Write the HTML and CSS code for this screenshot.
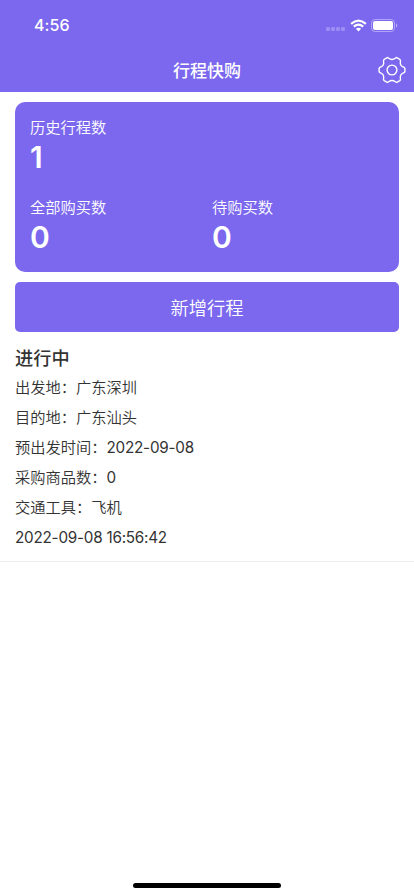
FILE: index.html
```html
<!DOCTYPE html>
<html lang="zh-CN">
<head>
<meta charset="utf-8">
<meta name="viewport" content="width=device-width, initial-scale=1">
<title>行程快购</title>
<link rel="stylesheet" href="styles.css">
</head>
<body>
<header class="top">
  <div class="status">
    <span class="clock">4:56</span>
    <div class="indicators">
      <svg class="signal" width="20" height="6" viewBox="0 0 20 6" fill="#fff" fill-opacity=".25"><rect x="0" y="1" width="4" height="4" rx="1.200"/><rect x="5" y="1" width="4" height="4" rx="1.200"/><rect x="10" y="1" width="4" height="4" rx="1.200"/><rect x="15" y="1" width="4" height="4" rx="1.200"/></svg>
      <svg class="wifi" width="17" height="13" viewBox="0 0 17 13" fill="none" stroke="#fff" stroke-width="2.200"><path d="M1.100 4.800Q8.500-1.600 15.900 4.800M3.800 7.700Q8.500 3.700 13.200 7.700"/><path d="M5.900 9.700Q8.500 7.700 11.100 9.700L8.500 12.400Z" fill="#fff" stroke="none"/></svg>
      <svg width="27" height="13" viewBox="0 0 27 13"><rect x=".5" y=".5" width="23" height="12" rx="3.500" fill="none" stroke="#fff" stroke-opacity=".4"/><rect x="2" y="2" width="20" height="9" rx="2" fill="#fff"/><path d="M25 4.500v4c.8-.3 1.300-1.100 1.300-2s-.5-1.700-1.300-2Z" fill="#fff" fill-opacity=".45"/></svg>
    </div>
  </div>
  <nav class="nav">
    <h1>行程快购</h1>
    <svg class="gear" width="28" height="28" viewBox="0 0 28 28" fill="none" stroke="#fff" stroke-width="1.400" stroke-linejoin="round"><path d="M9.200 1.600C10.500 1.200 11 3.500 14 3.500S17.500 1.200 18.800 1.600L21.800 3.300C23.600 4.500 21.300 6.500 22.800 9S26.700 11 26.900 12.300V15.700C26.700 17 24.300 16.500 22.800 19S23.600 23.500 21.800 24.700L18.800 26.400C17.500 26.800 17 24.500 14 24.500S10.500 26.800 9.200 26.400L6.200 24.700C4.400 23.500 6.700 21.500 5.200 19S1.300 17 1.100 15.700V12.300C1.300 11 3.700 11.500 5.200 9S4.400 4.500 6.200 3.300Z"/><circle cx="14" cy="14" r="4.900"/></svg>
  </nav>
</header>
<main>
  <section class="stats">
    <div class="stat wide"><span>历史行程数</span><strong>1</strong></div>
    <div class="stat"><span>全部购买数</span><strong>0</strong></div>
    <div class="stat"><span>待购买数</span><strong>0</strong></div>
  </section>
  <button class="add">新增行程</button>
  <article class="trip">
    <h2>进行中</h2>
    <p>出发地：广东深圳</p>
    <p>目的地：广东汕头</p>
    <p>预出发时间：<time>2022-09-08</time></p>
    <p>采购商品数：<b>0</b></p>
    <p>交通工具：飞机</p>
    <p><time>2022-09-08 16:56:42</time></p>
  </article>
</main>
<footer class="home"></footer>
</body>
</html>
```
FILE: styles.css
```css
* { box-sizing: border-box; }
body { margin: 0; height: 896px; display: flex; flex-direction: column; background: #fff; color: #333; font-family: Inter, "Noto Sans CJK SC", sans-serif; font-size: 15.25px; font-weight: 350; }
.top { height: 92px; background: #7b68ee; color: #fff; }
.status { height: 48px; display: flex; justify-content: space-between; align-items: center; padding: 2px 16px 0 34px; }
.clock { font-size: 16px; font-weight: 550; letter-spacing: .05px; }
.indicators { display: flex; align-items: center; gap: 4px; }
.signal { margin-top: 8px; }
.nav { height: 44px; display: grid; grid-template-columns: 1fr auto 1fr; align-items: center; padding: 0 8px; }
.nav h1 { grid-column: 2; margin: 2px 0 0; font-size: 17px; line-height: 24px; font-weight: 500; }
.gear { justify-self: end; }
main { flex: 1; }
.stats { display: grid; grid-template-columns: 1fr 1fr; grid-template-rows: 80px 80px; height: 170px; margin: 10px 15px; padding: 11px 5px 0 15px; border-radius: 10px; background: #7b68ee; color: #fff; }
.stat { display: flex; flex-direction: column; }
.stat.wide { grid-column: 1 / 3; }
.stat span { line-height: 30px; }
.stat strong { font-size: 30px; line-height: 29px; font-weight: 600; }
.add { display: block; width: 384px; height: 50px; margin: 0 15px; padding: 0 0 1px; border: 0; border-radius: 5px; background: #7b68ee; color: #fff; font: 350 18.3px Inter, "Noto Sans CJK SC", sans-serif; }
.trip { padding: 11px 15px 8px; border-bottom: 1px solid #eee; }
.trip h2 { margin: 0; font-size: 18.2px; line-height: 30px; font-weight: 500; }
.trip p { margin: 0; line-height: 30px; }
.trip time { font-weight: 400; letter-spacing: -.23px; }
.trip b { font-weight: 400; }
.home { width: 148px; height: 5px; margin: 0 auto 8px; border-radius: 3px; background: #000; }
```
